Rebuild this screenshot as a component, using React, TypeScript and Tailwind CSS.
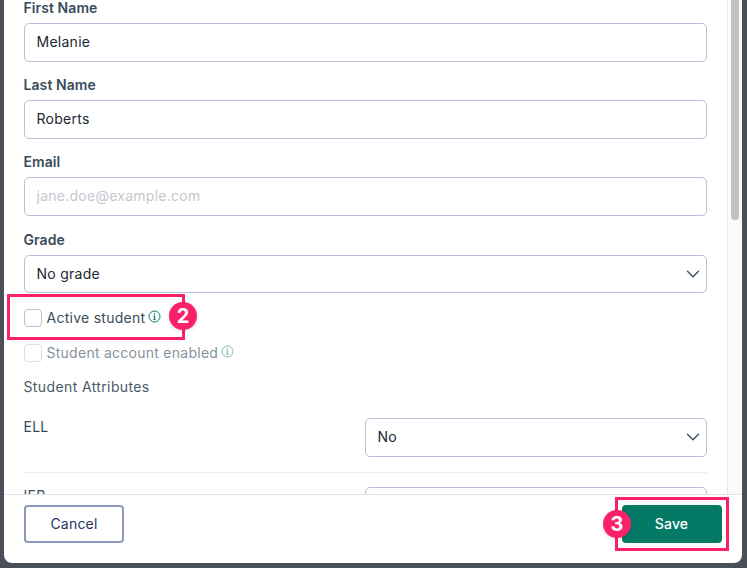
import React from "react";
import { ChevronDown } from "lucide-react";

const font = { fontFamily: "Inter, 'Noto Sans', sans-serif" };

function Info({ faded }: { faded?: boolean }) {
  return (
    <svg width="13" height="13" viewBox="0 0 13 13" fill="none" className={faded ? "opacity-50" : ""}>
      <circle cx="6.5" cy="6.5" r="5.5" stroke="#047a66" strokeWidth="1" />
      <path d="M6.5 5.6V9.6" stroke="#047a66" strokeWidth="1.2" />
      <path d="M5.4 5.7H6.5M5.3 9.6H7.7" stroke="#047a66" strokeWidth="0.9" />
      <circle cx="6.4" cy="3.7" r="0.7" fill="#047a66" />
    </svg>
  );
}

function Field({ label, value, placeholder, select }: { label: string; value?: string; placeholder?: string; select?: boolean }) {
  return (
    <div className="mb-[13.6px]">
      <div className="h-5 mb-[5px] -ml-[0.5px] text-sm leading-5 font-semibold tracking-[0.08px] text-[#3a4b5a]">{label}</div>
      <Box value={value} placeholder={placeholder} select={select} />
    </div>
  );
}

function Box({ value, placeholder, select }: { value?: string; placeholder?: string; select?: boolean }) {
  return (
    <div className="h-[38.5px] flex items-center justify-between rounded-[5px] border border-[#b9c1d6] bg-white pl-[11.5px] pr-[2px] text-sm tracking-[0.26px]">
      <span className={value ? "text-[#212733]" : "text-[#c4c8ce]"}>{value ?? placeholder}</span>
      {select && <ChevronDown size={22} strokeWidth={1.5} className="text-[#3f4f5c]" />}
    </div>
  );
}

function Check({ label, faded }: { label: string; faded?: boolean }) {
  return (
    <div className="flex items-center h-[18px]">
      <div className={`w-[18px] h-[18px] rounded-[4px] border bg-white ${faded ? "border-[#d9dde8]" : "border-[#b9c1d6]"}`} />
      <span className={`ml-[4.5px] -mt-[1px] text-sm leading-5 tracking-[0.26px] ${faded ? "text-[#87929c]" : "text-[#3a4b5a]"}`}>{label}</span>
      <span className="ml-[3px] -mt-[4px] flex"><Info faded={faded} /></span>
    </div>
  );
}

function Badge({ n, className }: { n: string; className: string }) {
  return (
    <div className={`absolute w-7 h-7 rounded-full bg-[#fb2168] text-white font-bold text-[20px] leading-7 text-center shadow-[0_1px_4px_rgba(0,0,0,0.15)] ${className}`}>
      {n}
    </div>
  );
}

export default function App() {
  return (
    <div style={font} className="relative w-[747px] h-[568px] overflow-hidden bg-[#495057] pl-1 pr-[5px] pb-[5px] flex flex-col">
      <div className="flex-1 min-h-0 flex flex-col bg-white rounded-b-lg overflow-hidden">
        <div className="h-[494px] flex overflow-hidden">
          <div className="flex-1 min-w-0 overflow-hidden pl-5 pr-5">
            <div className="-mt-[2px]">
              <Field label="First Name" value="Melanie" />
              <Field label="Last Name" value="Roberts" />
              <div className="pb-[0.6px]">
                <Field label="Email" placeholder="jane.doe@example.com" />
              </div>
              <Field label="Grade" value="No grade" select />
              <div className="mt-[15.8px] mb-[17px]"><Check label="Active student" /></div>
              <Check label="Student account enabled" faded />
              <div className="mt-[15px] h-5 text-sm leading-5 tracking-[0.38px] text-[#4d5a66] -ml-[0.5px]">Student Attributes</div>
              <div className="mt-[21px] flex justify-between border-b border-[#ececec] pb-[15px]">
                <div className="text-sm leading-5 tracking-[0.26px] text-[#3a4b5a] -mt-[1px] -ml-[0.5px]">ELL</div>
                <div className="w-[342px]"><Box value="No" select /></div>
              </div>
              <div className="mt-[14.5px] flex justify-between">
                <div className="text-sm leading-5 tracking-[0.26px] text-[#3a4b5a] -mt-[1px] -ml-[0.5px]">IEP</div>
                <div className="w-[342px]"><Box value="No" select /></div>
              </div>
            </div>
          </div>
          <div className="w-[15px] shrink-0 bg-[#fafafa] border-l border-[#e8e8e8] pl-[3px]">
            <div className="w-2 h-[220px] bg-[#c1c1c1] rounded-b" />
          </div>
        </div>
        <div className="flex-1 border-t border-[#dfe1e4] flex items-start justify-between pl-5 pr-5 pt-[10px]">
          <button className="w-[100px] h-[38px] rounded-[4px] border-2 border-[#8b99b8] bg-white text-sm font-normal tracking-[0.2px] text-[#1d3461]">Cancel</button>
          <button className="w-[100px] h-[38px] pr-px rounded-[4px] bg-[#047a66] text-sm font-medium tracking-[0.2px] text-white">Save</button>
        </div>
      </div>

      <div className="absolute left-[7px] top-[294px] w-[178px] h-[46px] border-[3px] border-[#fb2168] pointer-events-none" />
      <Badge n="2" className="left-[169px] top-[302px]" />
      <div className="absolute left-[615px] top-[497px] w-[114px] h-[54px] border-[3px] border-[#fb2168] pointer-events-none" />
      <Badge n="3" className="left-[603px] top-[510px]" />
    </div>
  );
}
